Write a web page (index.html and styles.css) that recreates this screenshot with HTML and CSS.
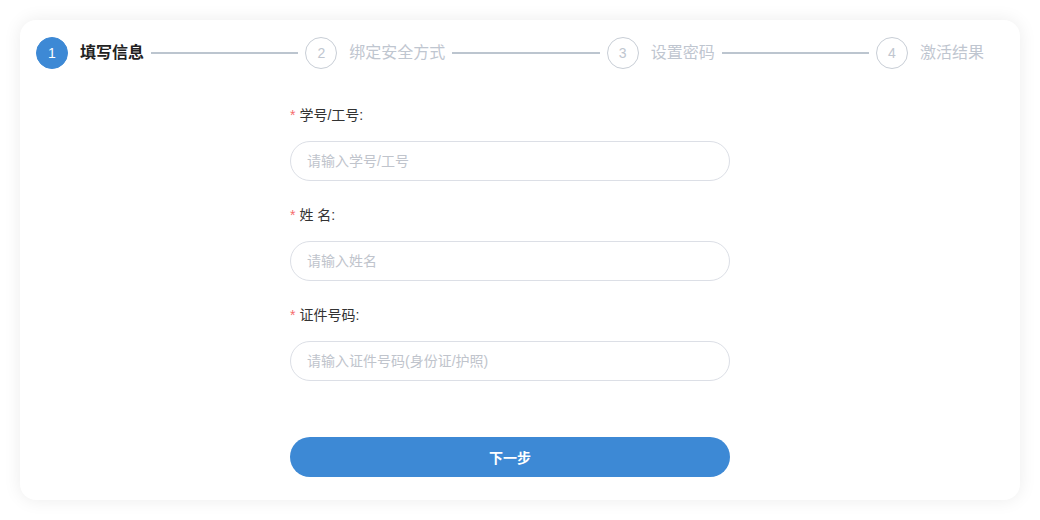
FILE: index.html
```html
<!DOCTYPE html>
<html lang="zh-CN">
<head>
  <meta charset="UTF-8">
  <title>账号激活</title>
  <link rel="stylesheet" href="styles.css">
</head>
<body>
  <div class="card">
    <div class="steps">
      <div class="step active">
        <span class="step-num">1</span>
        <span class="step-title">填写信息</span>
      </div>
      <div class="step-line"></div>
      <div class="step">
        <span class="step-num">2</span>
        <span class="step-title">绑定安全方式</span>
      </div>
      <div class="step-line"></div>
      <div class="step">
        <span class="step-num">3</span>
        <span class="step-title">设置密码</span>
      </div>
      <div class="step-line"></div>
      <div class="step">
        <span class="step-num">4</span>
        <span class="step-title">激活结果</span>
      </div>
    </div>

    <form class="info-form">
      <div class="form-item">
        <label for="account"><span class="req">*</span>学号/工号:</label>
        <input type="text" id="account" placeholder="请输入学号/工号">
      </div>
      <div class="form-item">
        <label for="name"><span class="req">*</span>姓 名:</label>
        <input type="text" id="name" placeholder="请输入姓名">
      </div>
      <div class="form-item">
        <label for="idno"><span class="req">*</span>证件号码:</label>
        <input type="text" id="idno" placeholder="请输入证件号码(身份证/护照)">
      </div>
      <button type="button" class="next-btn">下一步</button>
    </form>
  </div>
</body>
</html>
```

FILE: styles.css
```css
body {
  margin: 0;
  padding: 20px;
  background: #fff;
  font-family: "Liberation Sans", Arial, "Noto Sans CJK SC", sans-serif;
  color: #333;
}

.card {
  height: 480px;
  box-sizing: border-box;
  background: #fff;
  border-radius: 16px;
  box-shadow: 0 0 18px rgba(0, 0, 0, 0.08);
  padding: 17px 36px 0 16px;
}

.steps {
  display: flex;
  align-items: center;
  height: 32px;
}

.step {
  display: flex;
  align-items: center;
}

.step-num {
  width: 32px;
  height: 32px;
  box-sizing: border-box;
  border: 1px solid #c8ced6;
  border-radius: 50%;
  display: flex;
  align-items: center;
  justify-content: center;
  font-size: 14px;
  color: #c0c6cf;
}

.step-title {
  margin: 0 0 4px 12px;
  font-size: 16px;
  color: #bfc6d0;
}

.step.active .step-num {
  background: #3d89d5;
  border-color: #3d89d5;
  color: #fff;
}

.step.active .step-title {
  color: #222;
  font-weight: bold;
}

.step-line {
  flex: 1;
  height: 2px;
  background: #bcc5cf;
  margin: 0 7px;
}

.info-form {
  width: 440px;
  margin: 36px auto 0;
}

.form-item {
  margin-bottom: 24px;
}

.form-item label {
  display: block;
  height: 20px;
  line-height: 20px;
  font-size: 14px;
  color: #333;
  margin-bottom: 16px;
}

.req {
  color: #f56c6c;
  margin-right: 4px;
}

.form-item input {
  display: block;
  width: 100%;
  height: 40px;
  box-sizing: border-box;
  border: 1px solid #dcdfe6;
  border-radius: 20px;
  padding: 0 16px;
  font-size: 14px;
  font-family: inherit;
  color: #333;
  outline: none;
}

.form-item input::placeholder {
  color: #c0c4cc;
}

.next-btn {
  display: block;
  width: 100%;
  height: 40px;
  margin-top: 56px;
  border: none;
  border-radius: 20px;
  background: #3d89d5;
  color: #fff;
  font-size: 14px;
  font-weight: bold;
  font-family: inherit;
  cursor: pointer;
}
```
